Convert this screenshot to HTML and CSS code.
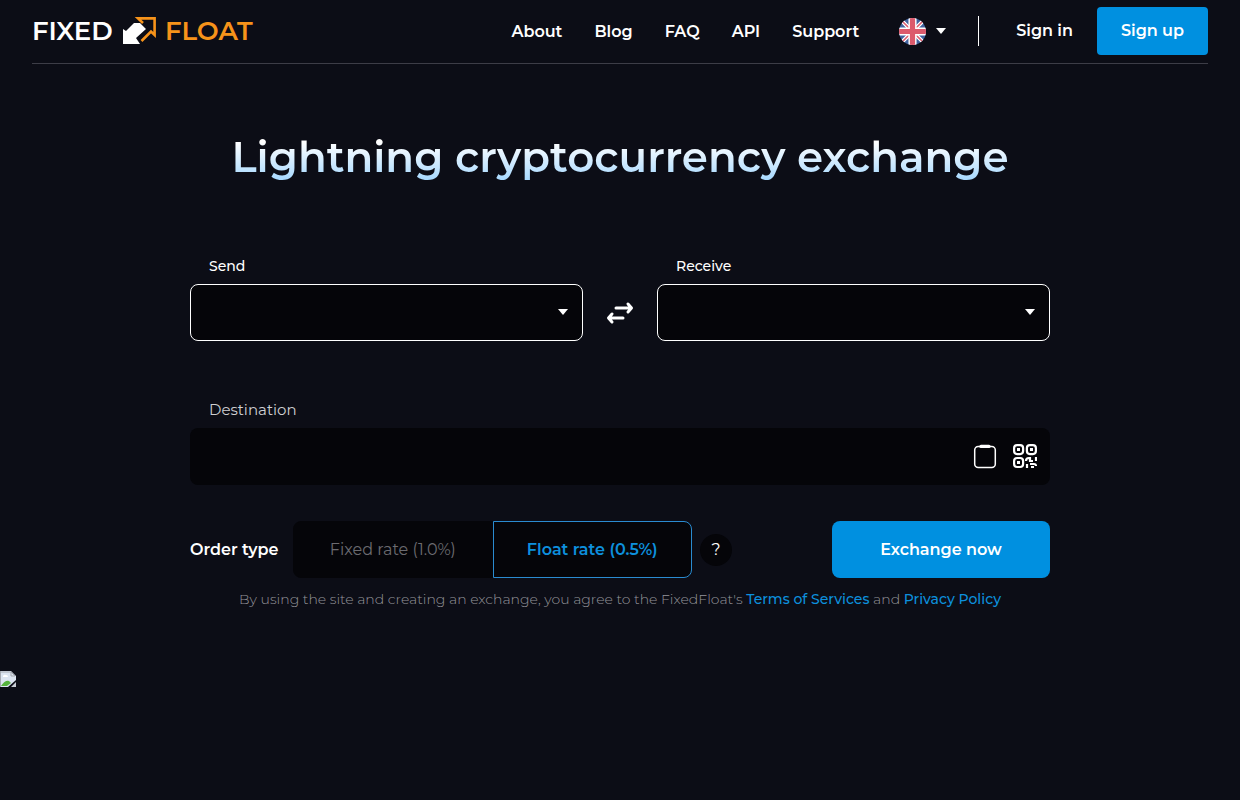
FILE: index.html
```html
<!DOCTYPE html>
<html lang="en">
<head>
<meta charset="utf-8">
<meta name="viewport" content="width=device-width, initial-scale=1">
<title>FixedFloat</title>
<link rel="stylesheet" href="styles.css">
</head>
<body>
<header class="header">
  <a class="logo" href="#" aria-label="FixedFloat">
    <span class="logo-word logo-fixed">FIXED</span>
    <svg class="logo-mark" width="34" height="28" viewBox="0 0 34 28" aria-hidden="true">
      <path d="M0 12l3 2 8-8h6l6 6-10 9 4 6H0z" fill="#fff"/>
      <path d="M20 6l-5-4.6h16.6V18L28 14.5 18.5 24" fill="none" stroke="#f7931a" stroke-width="2.6"/>
    </svg>
    <span class="logo-word logo-float">FLOAT</span>
  </a>
  <nav class="nav">
    <a href="#">About</a>
    <a href="#">Blog</a>
    <a href="#">FAQ</a>
    <a href="#">API</a>
    <a href="#">Support</a>
  </nav>
  <button class="language" type="button" aria-label="Language: English">
    <svg width="27" height="27" viewBox="0 0 28 28" aria-hidden="true">
      <defs><clipPath id="disc"><circle cx="14" cy="14" r="14"/></clipPath></defs>
      <g clip-path="url(#disc)">
        <path d="M0 0h28v28H0z" fill="#41639f"/>
        <path d="M0 0l28 28M28 0L0 28" stroke="#fff" stroke-width="4"/>
        <path d="M0 0l28 28M28 0L0 28" stroke="#dc5a6c" stroke-width="1.6"/>
        <path d="M14 0v28M0 14h28" stroke="#fff" stroke-width="8.4"/>
        <path d="M14 0v28M0 14h28" stroke="#dc5a6c" stroke-width="5.4"/>
      </g>
    </svg>
    <svg width="10" height="6" viewBox="0 0 10 6" aria-hidden="true"><path d="M0 0h10L5 6z" fill="#fff"/></svg>
  </button>
  <div class="account">
    <a class="sign-in" href="#">Sign in</a>
    <a class="sign-up" href="#">Sign up</a>
  </div>
</header>

<main class="main">
  <h1 class="title">Lightning cryptocurrency exchange</h1>
  <form class="exchange">
    <div class="pair">
      <div class="field">
        <label class="label" for="send">Send</label>
        <div class="select-wrap">
          <select class="box select" id="send"></select>
          <svg class="caret" width="10" height="6" viewBox="0 0 10 6" aria-hidden="true"><path d="M0 0h10L5 6z" fill="#fff"/></svg>
        </div>
      </div>
      <button class="swap" type="button" aria-label="Swap currencies">
        <svg width="28" height="24" viewBox="0 0 28 24" fill="none" stroke="#fff" stroke-width="3" stroke-linecap="round" stroke-linejoin="round" aria-hidden="true">
          <path d="M10 7h15M22 3l3.5 4-3.5 4M17 17H3M6 13l-3.5 4L6 21"/>
        </svg>
      </button>
      <div class="field">
        <label class="label" for="receive">Receive</label>
        <div class="select-wrap">
          <select class="box select" id="receive"></select>
          <svg class="caret" width="10" height="6" viewBox="0 0 10 6" aria-hidden="true"><path d="M0 0h10L5 6z" fill="#fff"/></svg>
        </div>
      </div>
    </div>

    <div class="destination">
      <label class="label label-soft" for="address">Destination</label>
      <div class="address">
        <input class="address-input" id="address" type="text">
        <button class="icon-button" type="button" aria-label="Paste">
          <svg width="24" height="26" viewBox="0 0 24 26" fill="none" stroke="#fff" aria-hidden="true">
            <rect x="1.7" y="2.5" width="20.6" height="21" rx="3.5" stroke-width="1.5"/>
            <path d="M8 2.4h8" stroke-width="3.4" stroke-linecap="round"/>
          </svg>
        </button>
        <button class="icon-button" type="button" aria-label="Scan QR code">
          <svg width="24" height="26" viewBox="0 0 24 26" fill="none" stroke="#fff" stroke-width="2.2" aria-hidden="true">
            <rect x="1.1" y="1.1" width="9" height="9" rx="3"/>
            <rect x="13.9" y="1.1" width="9" height="9" rx="3"/>
            <rect x="1.1" y="14" width="9" height="9" rx="3"/>
            <path d="M4 4h3v3H4zM17 4h3v3h-3zM4 17h3v3H4z" fill="#fff" stroke="none"/>
            <path d="M14 24v-4M13 17q0-3 3-3h1v3h3M23 13v4M17 20h4q2 0 2 2M18 23h3"/>
          </svg>
        </button>
      </div>
    </div>

    <div class="order">
      <span class="order-title" id="order-type">Order type</span>
      <div class="rates" role="radiogroup" aria-labelledby="order-type">
        <label class="rate"><input type="radio" name="rate"><span>Fixed rate (1.0%)</span></label>
        <label class="rate"><input type="radio" name="rate" checked><span>Float rate (0.5%)</span></label>
      </div>
      <button class="help" type="button">?</button>
      <button class="submit" type="submit">Exchange now</button>
    </div>
    <p class="legal">By using the site and creating an exchange, you agree to the FixedFloat's <a href="#">Terms of Services</a> and <a href="#">Privacy Policy</a></p>
  </form>
</main>
<svg class="missing" width="16" height="16" viewBox="0 0 16 16" aria-hidden="true">
  <path d="M0 0h11l5 5v4L8 16H0z" fill="#dce4f0"/>
  <path d="M0 1h11l4 4H11V1M.5 0v16" fill="none" stroke="#a5a9b0"/>
  <path d="M3 5q1-2 3-1 2 0 2 2H3z" fill="#fff"/>
  <path d="M1 15q4-6 8-5l2 2-4 3z" fill="#56b33c"/>
  <path d="M11 16l5-5v5z" fill="#c8ccd4"/>
</svg>
</body>
</html>
```
FILE: styles.css
```css
* { box-sizing: border-box; }

body {
  margin: 0;
  background: #0c0d16;
  color: #fff;
  font-family: Montserrat, Inter, sans-serif;
  font-size: 16px;
}

a { color: inherit; text-decoration: none; }

button {
  border: 0;
  padding: 0;
  background: none;
  color: inherit;
  font: inherit;
  cursor: pointer;
}

svg { display: block; }

.header {
  display: flex;
  align-items: center;
  margin: 0 32px;
  padding: 7px 0 8px;
  border-bottom: 1px solid #3d3d47;
  font-weight: 600;
}

.logo {
  display: flex;
  align-items: center;
  gap: 8px;
  margin-right: auto;
}

.logo-word {
  font-size: 26px;
  font-weight: 600;
  line-height: 28px;
}

.logo-fixed { min-width: 83px; }
.logo-float { color: #f7931a; }

.nav {
  display: flex;
  gap: 32px;
}

.language {
  display: flex;
  align-items: center;
  gap: 10px;
  margin-left: 40px;
}

.account {
  display: flex;
  align-items: center;
  margin-left: 32px;
}

.sign-in {
  padding: 5px 24px 5px 37px;
  border-left: 1px solid #fff;
  line-height: 20px;
}

.sign-up {
  padding: 14px 24px;
  border-radius: 4px;
  background: #0090e0;
  line-height: 20px;
}

.main {
  max-width: 892px;
  margin: 0 auto;
  padding: 63px 16px 61px;
}

.title {
  margin: 0;
  background: linear-gradient(#fff 25%, #a5d8ff 90%);
  background-clip: text;
  -webkit-background-clip: text;
  color: transparent;
  font-size: 42px;
  font-weight: 600;
  line-height: 60px;
  text-align: center;
}

.pair {
  display: flex;
  align-items: flex-end;
  margin-top: 69px;
}

.field { flex: 1; }

.label {
  display: block;
  padding: 0 19px 8px;
  font-size: 14px;
  font-weight: 500;
  line-height: 20px;
}

.label-soft {
  color: #cfcfd3;
  font-size: 15px;
  font-weight: 400;
}

.select-wrap {
  display: grid;
  align-items: center;
}

.select-wrap > * { grid-area: 1 / 1; }

.box {
  width: 100%;
  height: 57px;
  border: 1px solid #fff;
  border-radius: 8px;
  background: #050509;
  color: #fff;
}

.select {
  appearance: none;
  padding: 0 40px 0 20px;
  font: inherit;
}

.caret {
  justify-self: end;
  margin-right: 15px;
  margin-bottom: 1px;
  pointer-events: none;
}

.swap {
  display: grid;
  place-items: center;
  width: 74px;
  height: 57px;
}

.destination { margin-top: 59px; }

.address {
  display: flex;
  align-items: center;
  gap: 16px;
  height: 57px;
  padding-right: 13px;
  border-radius: 8px;
  background: #050509;
}

.address-input {
  flex: 1;
  min-width: 0;
  height: 100%;
  padding: 0 20px;
  border: 0;
  background: none;
  color: #fff;
  font: inherit;
}

.order {
  display: flex;
  align-items: center;
  margin-top: 36px;
}

.order-title {
  min-width: 103px;
  font-weight: 600;
}

.rates {
  display: grid;
  grid-template-columns: 1fr 1fr;
  flex: 0 1 399px;
  height: 57px;
}

.rate {
  display: grid;
  color: #6b6b70;
  cursor: pointer;
}

.rate > * { grid-area: 1 / 1; }

.rate input {
  margin: 0;
  opacity: 0;
}

.rate span {
  display: grid;
  place-items: center;
  border: 1px solid #050509;
  background: #050509;
}

.rate:first-child span { border-radius: 8px 0 0 8px; }
.rate:last-child span { border-radius: 0 8px 8px 0; }

.rate input:checked + span {
  border-color: #2a8bd0;
  color: #0d90dd;
  font-weight: 600;
}

.help {
  width: 32px;
  height: 32px;
  margin-left: 8px;
  border-radius: 50%;
  background: #050509;
}

.submit {
  width: 218px;
  height: 57px;
  margin-left: auto;
  border-radius: 8px;
  background: #0090e0;
  font-weight: 600;
}

.legal {
  margin: 11px 0 0;
  color: #94949a;
  font-size: 14px;
  font-weight: 300;
  line-height: 21px;
  text-align: center;
}

.legal a {
  color: #0d90dd;
  font-weight: 500;
}
```
